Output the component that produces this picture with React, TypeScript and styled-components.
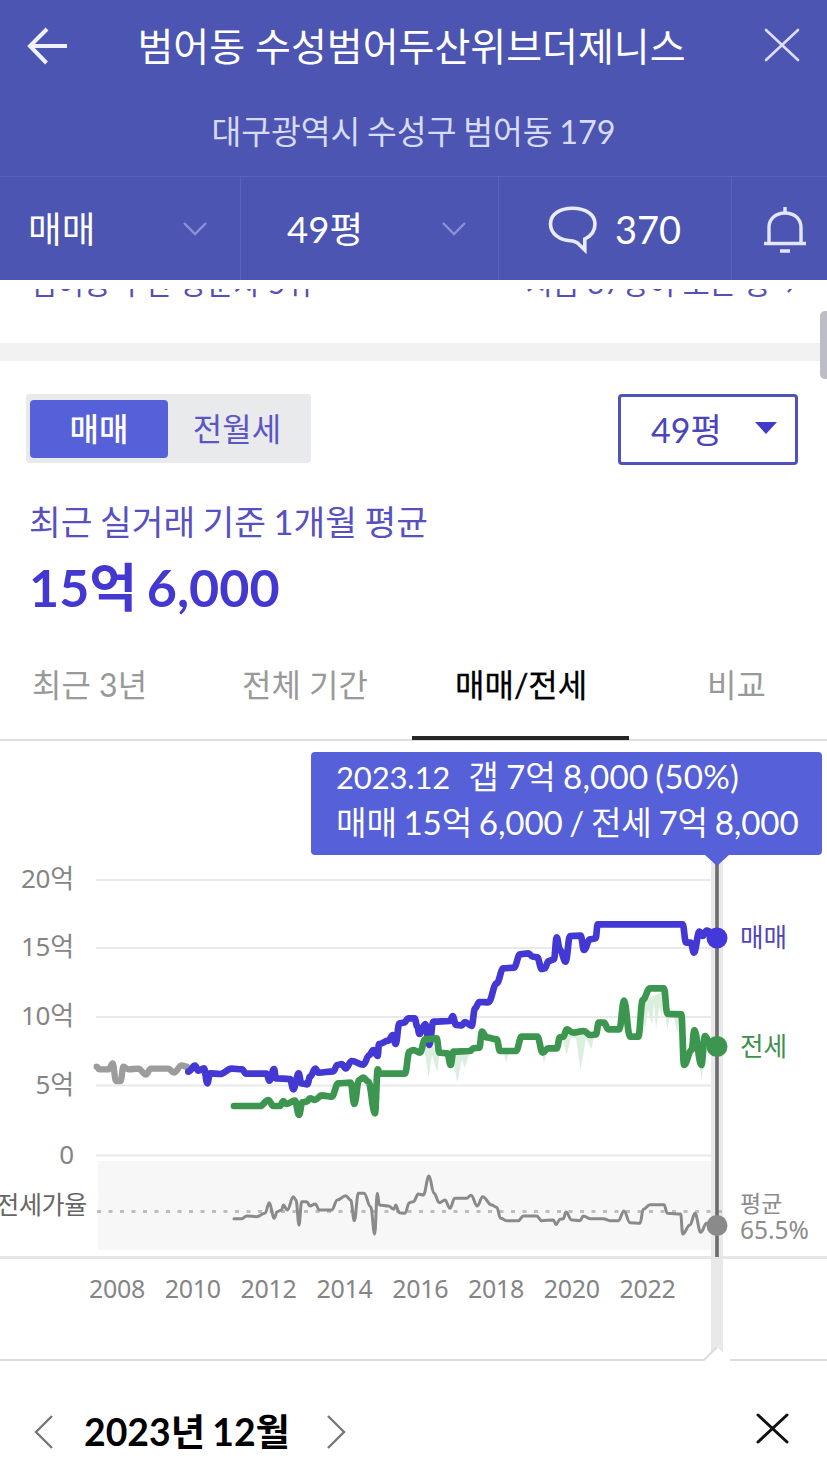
import React from "react";
import styled, { createGlobalStyle } from "styled-components";

const GlobalStyle = createGlobalStyle`
  * { box-sizing: border-box; }
  body {
    margin: 0;
    background: #fff;
    font-family: Lato, "Noto Sans CJK KR", sans-serif;
    overflow: hidden;
  }
  button { font: inherit; border: 0; background: none; padding: 0; color: inherit; }
`;

const AXIS_FONT = '"Noto Sans", "Noto Sans CJK KR", sans-serif';

const Screen = styled.div`
  position: relative;
  width: 827px;
  height: 1470px;
  display: flex;
  flex-direction: column;
  overflow: hidden;
  background: #fff;
`;

const Header = styled.header`
  height: 280px;
  flex: none;
  display: flex;
  flex-direction: column;
  background: #4c55b1;
  color: #fff;
`;

const TitleRow = styled.div`
  height: 90px;
  display: flex;
  align-items: center;
  justify-content: space-between;
  padding: 0 27px 0 26px;
  svg { display: block; }
`;

const Title = styled.h1`
  margin: 1px 9px 0 0;
  font-size: 39px;
  font-weight: 400;
  line-height: 50px;
  white-space: nowrap;
`;

const Address = styled.div`
  height: 86px;
  text-align: center;
  font-size: 32.4px;
  line-height: 84px;
  word-spacing: -1.6px;
  color: #d8dbf6;
`;

const FilterBar = styled.div`
  height: 104px;
  display: grid;
  grid-template-columns: 240px 258px 233px 96px;
  border-top: 1px solid #5a62bc;
`;

const FilterCell = styled.button<{ $start: number; $end: number }>`
  display: flex;
  align-items: center;
  justify-content: space-between;
  padding: 0 ${(p) => p.$end}px 0 ${(p) => p.$start}px;
  font-size: 36.6px;
  line-height: 44px;
  color: #fff;
  & + & { border-left: 1px solid #5a62bc; }
`;

const CommentCount = styled.span`
  font-size: 38px;
`;

const RankRow = styled.div`
  height: 54px;
  margin-top: 9px;
  flex: none;
  display: flex;
  justify-content: space-between;
  align-items: flex-start;
  padding: 0 29px 0 30px;
  overflow: hidden;
  font-size: 29.3px;
  line-height: 40px;
  color: #5450b4;
`;

const RankText = styled.span`
  display: flex;
  align-items: center;
  gap: 16px;
  margin-top: -26px;
  white-space: nowrap;
`;

const Divider = styled.div`
  height: 18px;
  flex: none;
  background: #f2f2f2;
`;

const Controls = styled.div`
  display: flex;
  justify-content: space-between;
  align-items: flex-start;
  padding: 33px 29px 0 26px;
`;

const Segmented = styled.div`
  width: 285px;
  height: 69px;
  display: flex;
  padding: 6px 4px 5px;
  border-radius: 3px;
  background: #e9eaec;
`;

const Segment = styled.button<{ $active?: boolean }>`
  width: 138px;
  border-radius: 4px;
  font-size: 32px;
  line-height: 56px;
  font-weight: ${(p) => (p.$active ? 500 : 400)};
  color: ${(p) => (p.$active ? "#fff" : "#5b56c4")};
  background: ${(p) => (p.$active ? "#5660d8" : "transparent")};
`;

const SizeSelect = styled.button`
  width: 180px;
  height: 71px;
  display: flex;
  align-items: center;
  justify-content: space-between;
  padding: 0 18px 0 30px;
  border: 3px solid #4f52b8;
  border-radius: 4px;
  font-size: 34px;
  line-height: 60px;
  color: #4a45bb;
  svg { margin-top: -4px; }
`;

const Summary = styled.div`
  padding: 28px 29px 0;
`;

const SummaryLabel = styled.div`
  font-size: 34.5px;
  line-height: 58px;
  height: 56px;
  word-spacing: -1.4px;
  color: #5650c0;
  white-space: nowrap;
`;

const SummaryPrice = styled.div`
  font-size: 52px;
  line-height: 76px;
  font-weight: 700;
  word-spacing: -3px;
  color: #4338cf;
  white-space: nowrap;
`;

const Tabs = styled.nav`
  height: 116px;
  display: grid;
  grid-template-columns: 199px 213px 217px 198px;
  border-bottom: 2px solid #dedee0;
`;

const Tab = styled.button<{ $active?: boolean; $start: number }>`
  height: ${(p) => (p.$active ? 115 : 114)}px;
  padding: 5px 0 0 ${(p) => p.$start}px;
  text-align: left;
  white-space: nowrap;
  font-size: 32px;
  color: ${(p) => (p.$active ? "#000" : "#999")};
  -webkit-text-stroke: ${(p) => (p.$active ? "0.3px #000" : "0")};
  border-bottom: 4px solid ${(p) => (p.$active ? "#242628" : "transparent")};
`;

const ChartPanel = styled.section`
  position: relative;
  height: 618px;
  flex: none;
  svg { display: block; }
`;

const Tooltip = styled.div`
  position: absolute;
  left: 311px;
  top: 11px;
  width: 511px;
  height: 103px;
  padding: 1px 25px 0;
  border-radius: 4px;
  background: #5660d8;
  color: #fff;
  &::after {
    content: "";
    position: absolute;
    left: 393px;
    top: 102px;
    border: 13px solid transparent;
    border-top: 12px solid #5660d8;
    border-bottom: 0;
  }
`;

const TooltipLine = styled.div`
  display: flex;
  align-items: baseline;
  gap: 18px;
  height: 46px;
  font-size: 33.2px;
  line-height: 46px;
  letter-spacing: -0.15px;
  word-spacing: -1.6px;
  white-space: nowrap;
`;

const TooltipDate = styled.span`
  font-size: 31px;
`;

const TooltipGap = styled.span`
  letter-spacing: 0.15px;
`;

const MonthBar = styled.footer`
  height: 112px;
  flex: none;
  display: flex;
  align-items: center;
  padding: 33px 38px 0 34px;
  svg { display: block; }
`;

const Month = styled.div`
  width: 206px;
  margin: 0 36px 0 30px;
  font-size: 37.4px;
  line-height: 50px;
  font-weight: 700;
  word-spacing: -2px;
  color: #000;
  white-space: nowrap;
`;

const CloseButton = styled.button`
  margin-left: auto;
  margin-top: -6px;
`;

const ScrollThumb = styled.div`
  position: absolute;
  right: 0;
  top: 311px;
  width: 7px;
  height: 68px;
  border-radius: 5px 0 0 5px;
  background: #bdbdc6;
`;

const Cross = ({ w, h, color, width }: { w: number; h: number; color: string; width: number }) => (
  <svg width={w} height={h} viewBox={`0 0 ${w} ${h}`} fill="none" stroke={color} strokeWidth={width} strokeLinecap="round">
    <path d={`M2 2L${w - 2} ${h - 2}M${w - 2} 2L2 ${h - 2}`} />
  </svg>
);

const Caret = () => (
  <svg width="26" height="16" viewBox="0 0 26 16" fill="none" stroke="#8b91d9" strokeWidth="2.4">
    <path d="M2 2L13 13L24 2" />
  </svg>
);

type Pt = [number, number];

/* Series are sampled at three units per pixel, from the plot's own origin (80, 900). */
const curve = (pts: Pt[]) =>
  pts.reduce((d, [x, y], i) => {
    if (i === 0) return `M${x} ${y}`;
    const [px, py] = pts[i - 1];
    const dx = (x - px) * 0.4;
    return `${d}C${px + dx} ${py} ${x - dx} ${y} ${x} ${y}`;
  }, "");

const early: Pt[] = [[50,500],[58,508],[86,508],[98,490],[108,543],[122,543],[130,500],[145,508],[175,506],[198,524],[212,506],[265,506],[282,518],[305,496],[320,500]];
const sale: Pt[] = [[325,515],[345,497],[355,512],[372,505],[382,550],[390,520],[420,522],[455,506],[486,508],[498,521],[560,521],[568,542],[582,507],[588,535],[630,537],[640,568],[656,520],[664,550],[682,553],[690,530],[706,506],[716,518],[760,514],[772,495],[785,492],[797,505],[815,483],[850,494],[868,465],[880,450],[893,468],[897,432],[925,422],[938,405],[947,432],[958,370],[972,368],[985,355],[1004,355],[1012,380],[1018,402],[1036,372],[1048,435],[1060,365],[1110,363],[1118,348],[1128,375],[1145,376],[1155,366],[1175,378],[1185,325],[1198,306],[1225,307],[1250,250],[1270,205],[1302,203],[1320,163],[1345,160],[1358,170],[1372,172],[1385,207],[1395,205],[1405,183],[1422,178],[1430,112],[1440,150],[1457,185],[1470,108],[1502,107],[1512,150],[1530,118],[1547,115],[1553,73],[1808,73],[1818,128],[1832,128],[1842,158],[1858,95],[1868,108],[1880,92],[1910,112]];
const jeonse: Pt[] = [[462,618],[540,618],[565,600],[580,618],[600,618],[610,603],[618,612],[645,602],[657,645],[667,607],[680,605],[690,595],[705,600],[725,586],[755,590],[775,550],[812,548],[823,612],[837,540],[850,533],[865,545],[885,640],[893,508],[900,521],[975,521],[988,455],[1000,450],[1020,458],[1035,418],[1070,415],[1078,458],[1102,460],[1112,495],[1120,455],[1170,453],[1180,445],[1198,443],[1206,395],[1220,412],[1250,418],[1260,453],[1308,453],[1325,410],[1372,410],[1388,458],[1405,445],[1430,445],[1440,412],[1450,410],[1460,388],[1480,398],[1512,393],[1530,405],[1548,403],[1556,368],[1572,368],[1585,388],[1618,388],[1632,302],[1650,410],[1675,410],[1688,300],[1710,265],[1752,265],[1762,342],[1804,343],[1812,495],[1835,450],[1843,390],[1864,495],[1875,408],[1890,430],[1910,440]];
const ratio: Pt[] = [[462,956],[485,956],[500,948],[530,950],[555,940],[568,908],[582,955],[592,935],[605,930],[610,915],[622,930],[640,890],[648,900],[657,975],[665,905],[680,905],[690,918],[706,912],[718,930],[755,930],[772,900],[797,887],[812,900],[823,962],[835,880],[852,880],[872,920],[884,1002],[892,880],[898,915],[925,918],[942,928],[947,915],[958,938],[975,940],[988,908],[1000,905],[1015,882],[1030,885],[1047,828],[1062,880],[1078,908],[1095,900],[1110,925],[1124,895],[1160,895],[1173,886],[1192,918],[1208,890],[1235,915],[1250,922],[1262,955],[1280,962],[1315,962],[1330,948],[1370,948],[1385,962],[1420,960],[1428,974],[1440,958],[1450,956],[1458,936],[1475,960],[1500,962],[1510,948],[1530,956],[1570,956],[1590,962],[1615,962],[1632,933],[1650,968],[1680,970],[1690,928],[1710,914],[1752,914],[1762,940],[1802,942],[1808,1002],[1830,975],[1845,940],[1862,997],[1880,970],[1910,976]];

const yLabels: [string, number][] = [["20억", 880], ["15억", 948], ["10억", 1017], ["5억", 1085.5], ["0", 1155.5]];
const years = [2008, 2010, 2012, 2014, 2016, 2018, 2020, 2022];

const PriceChart = () => (
  <svg width="827" height="618" viewBox="0 741 827 618" fontFamily={AXIS_FONT} fontSize="25">
    <rect x="98" y="1161" width="619" height="89" fill="#f7f7f7" />
    <rect x="711" y="862" width="12" height="490" fill="#e9e9e9" />
    {yLabels.map(([label, y]) => (
      <g key={label}>
        <path d={`M96 ${y}H722`} stroke="#e9e9e9" strokeWidth="2" />
        <text x="74" y={y + 8} textAnchor="end" fill="#858585" fontSize="26" letterSpacing="-0.2">{label}</text>
      </g>
    ))}
    <path d="M97 1211.5H722" stroke="#bdbdbd" strokeWidth="3" strokeDasharray="4 7.5" />
    <path d="M0 1257.5H827" stroke="#e6e6e6" strokeWidth="3" />
    <text x="87" y="1214" textAnchor="end" fill="#666" letterSpacing="-0.3">전세가율</text>
    {years.map((year, i) => (
      <text key={year} x={117 + i * 75.8} y="1298" textAnchor="middle" fill="#858585" letterSpacing="-0.3">{year}</text>
    ))}
    <path d="M717 860V1257" stroke="#6c6c6c" strokeWidth="3.6" />
    <g transform="translate(80 900) scale(0.33333)" fill="none" strokeLinecap="round" strokeLinejoin="round">
      <path
        fill="#dcefdf"
        d="M1030 430L1046 532L1056 465L1072 518L1080 450ZM1115 460L1132 548L1146 480L1154 505L1172 450ZM1270 455L1278 488L1288 455ZM1385 455L1392 492L1402 450ZM1445 405L1460 465L1472 415L1488 415L1502 510L1518 415L1534 447L1545 400ZM1690 300L1694 400L1704 330L1716 375L1722 310L1728 388L1738 320L1746 350L1750 275ZM1755 340L1762 388L1770 345ZM1780 345L1792 400L1800 345ZM1855 480L1865 540L1872 480Z"
      />
      <path d={curve(early)} stroke="#9c9c9c" strokeWidth="19" />
      <path d={curve(sale)} stroke="#4338d3" strokeWidth="20" />
      <path d={curve(jeonse)} stroke="#3d964f" strokeWidth="20" />
      <path d={curve(ratio)} stroke="#8a8a8a" strokeWidth="9" />
    </g>
    <circle cx="717" cy="938" r="10.5" fill="#4338d9" />
    <circle cx="717" cy="1046.500" r="10.5" fill="#3d964f" />
    <circle cx="717" cy="1225.500" r="10.5" fill="#8a8a8a" />
    <text x="740" y="947" fill="#5046b8" fontSize="25.6">매매</text>
    <text x="740" y="1056" fill="#3f8f50" fontSize="25.6">전세</text>
    <text x="740" y="1212" fill="#8c8c8c" fontSize="23">평균</text>
    <text x="740" y="1239" fill="#8c8c8c" fontSize="24.5">65.5%</text>
  </svg>
);

const PanelEdge = styled.svg`
  position: absolute;
  left: 0;
  bottom: -3px;
`;

export default function App() {
  return (
    <>
      <GlobalStyle />
      <Screen>
        <Header>
          <TitleRow>
            <svg width="42" height="40" viewBox="0 0 42 40" fill="none" stroke="#f0f1ff" strokeWidth="4">
              <path d="M4 21H41M21 4L4 21L20.500 38" />
            </svg>
            <Title>범어동 수성범어두산위브더제니스</Title>
            <Cross w={36} h={34} color="#dcdffa" width={2.6} />
          </TitleRow>
          <Address>대구광역시 수성구 범어동 179</Address>
          <FilterBar>
            <FilterCell $start={28} $end={32}>매매<Caret /></FilterCell>
            <FilterCell $start={46} $end={31}>49평<Caret /></FilterCell>
            <FilterCell $start={48} $end={50}>
              <svg width="52" height="50" viewBox="0 0 52 50" fill="none" stroke="#e9ebff" strokeWidth="3.6" strokeLinejoin="miter">
                <path d="M25.500 4.300C12.500 4.300 3.500 10.500 3.500 20C3.500 29.500 12 36.500 26 37L30 38.500L37.800 46V35C44 32 48 27 48 20C48 10.500 38.500 4.300 25.500 4.300Z" />
              </svg>
              <CommentCount>370</CommentCount>
            </FilterCell>
            <FilterCell $start={31} $end={20}>
              <svg width="44" height="48" viewBox="0 0 44 48" fill="none" stroke="#e4e6ff" strokeWidth="3.400">
                <path d="M22 2V8M6 38V22.500C6 14 12.500 8 22 8C31.500 8 38 14 38 22.500V38M1 38.500H43M17 46H27" />
              </svg>
            </FilterCell>
          </FilterBar>
        </Header>
        <RankRow>
          <RankText>범어동 주간 방문자 5위</RankText>
          <RankText>
            지금 37명이 보는 중
            <svg width="11" height="20" viewBox="0 0 11 20" fill="none" stroke="#5450b4" strokeWidth="2.200">
              <path d="M1 1L9 10L1 19" />
            </svg>
          </RankText>
        </RankRow>
        <Divider />
        <Controls>
          <Segmented>
            <Segment $active>매매</Segment>
            <Segment>전월세</Segment>
          </Segmented>
          <SizeSelect>
            49평
            <svg width="22" height="12" viewBox="0 0 22 12" fill="#4338c8"><path d="M0 0H22L11 12Z" /></svg>
          </SizeSelect>
        </Controls>
        <Summary>
          <SummaryLabel>최근 실거래 기준 1개월 평균</SummaryLabel>
          <SummaryPrice>15억 6,000</SummaryPrice>
        </Summary>
        <Tabs>
          <Tab $start={32}>최근 3년</Tab>
          <Tab $start={43}>전체 기간</Tab>
          <Tab $start={43} $active>매매/전세</Tab>
          <Tab $start={78}>비교</Tab>
        </Tabs>
        <ChartPanel>
          <PriceChart />
          <PanelEdge width="827" height="16" viewBox="0 0 827 16">
            <path d="M704 14L717 1L730 14V16H704Z" fill="#fff" />
            <path d="M0 14H704L717 1M730 14H827" fill="none" stroke="#dcdcdc" strokeWidth="2" />
          </PanelEdge>
          <Tooltip>
            <TooltipLine>
              <TooltipDate>2023.12</TooltipDate>
              <TooltipGap>갭 7억 8,000 (50%)</TooltipGap>
            </TooltipLine>
            <TooltipLine>매매 15억 6,000 / 전세 7억 8,000</TooltipLine>
          </Tooltip>
        </ChartPanel>
        <MonthBar>
          <svg width="20" height="34" viewBox="0 0 20 34" fill="none" stroke="#777" strokeWidth="2.400"><path d="M18 1L2 17L18 33" /></svg>
          <Month>2023년 12월</Month>
          <svg width="20" height="34" viewBox="0 0 20 34" fill="none" stroke="#777" strokeWidth="2.400"><path d="M2 1L18 17L2 33" /></svg>
          <CloseButton aria-label="닫기"><Cross w={33} h={31} color="#111" width={3} /></CloseButton>
        </MonthBar>
        <ScrollThumb />
      </Screen>
    </>
  );
}
